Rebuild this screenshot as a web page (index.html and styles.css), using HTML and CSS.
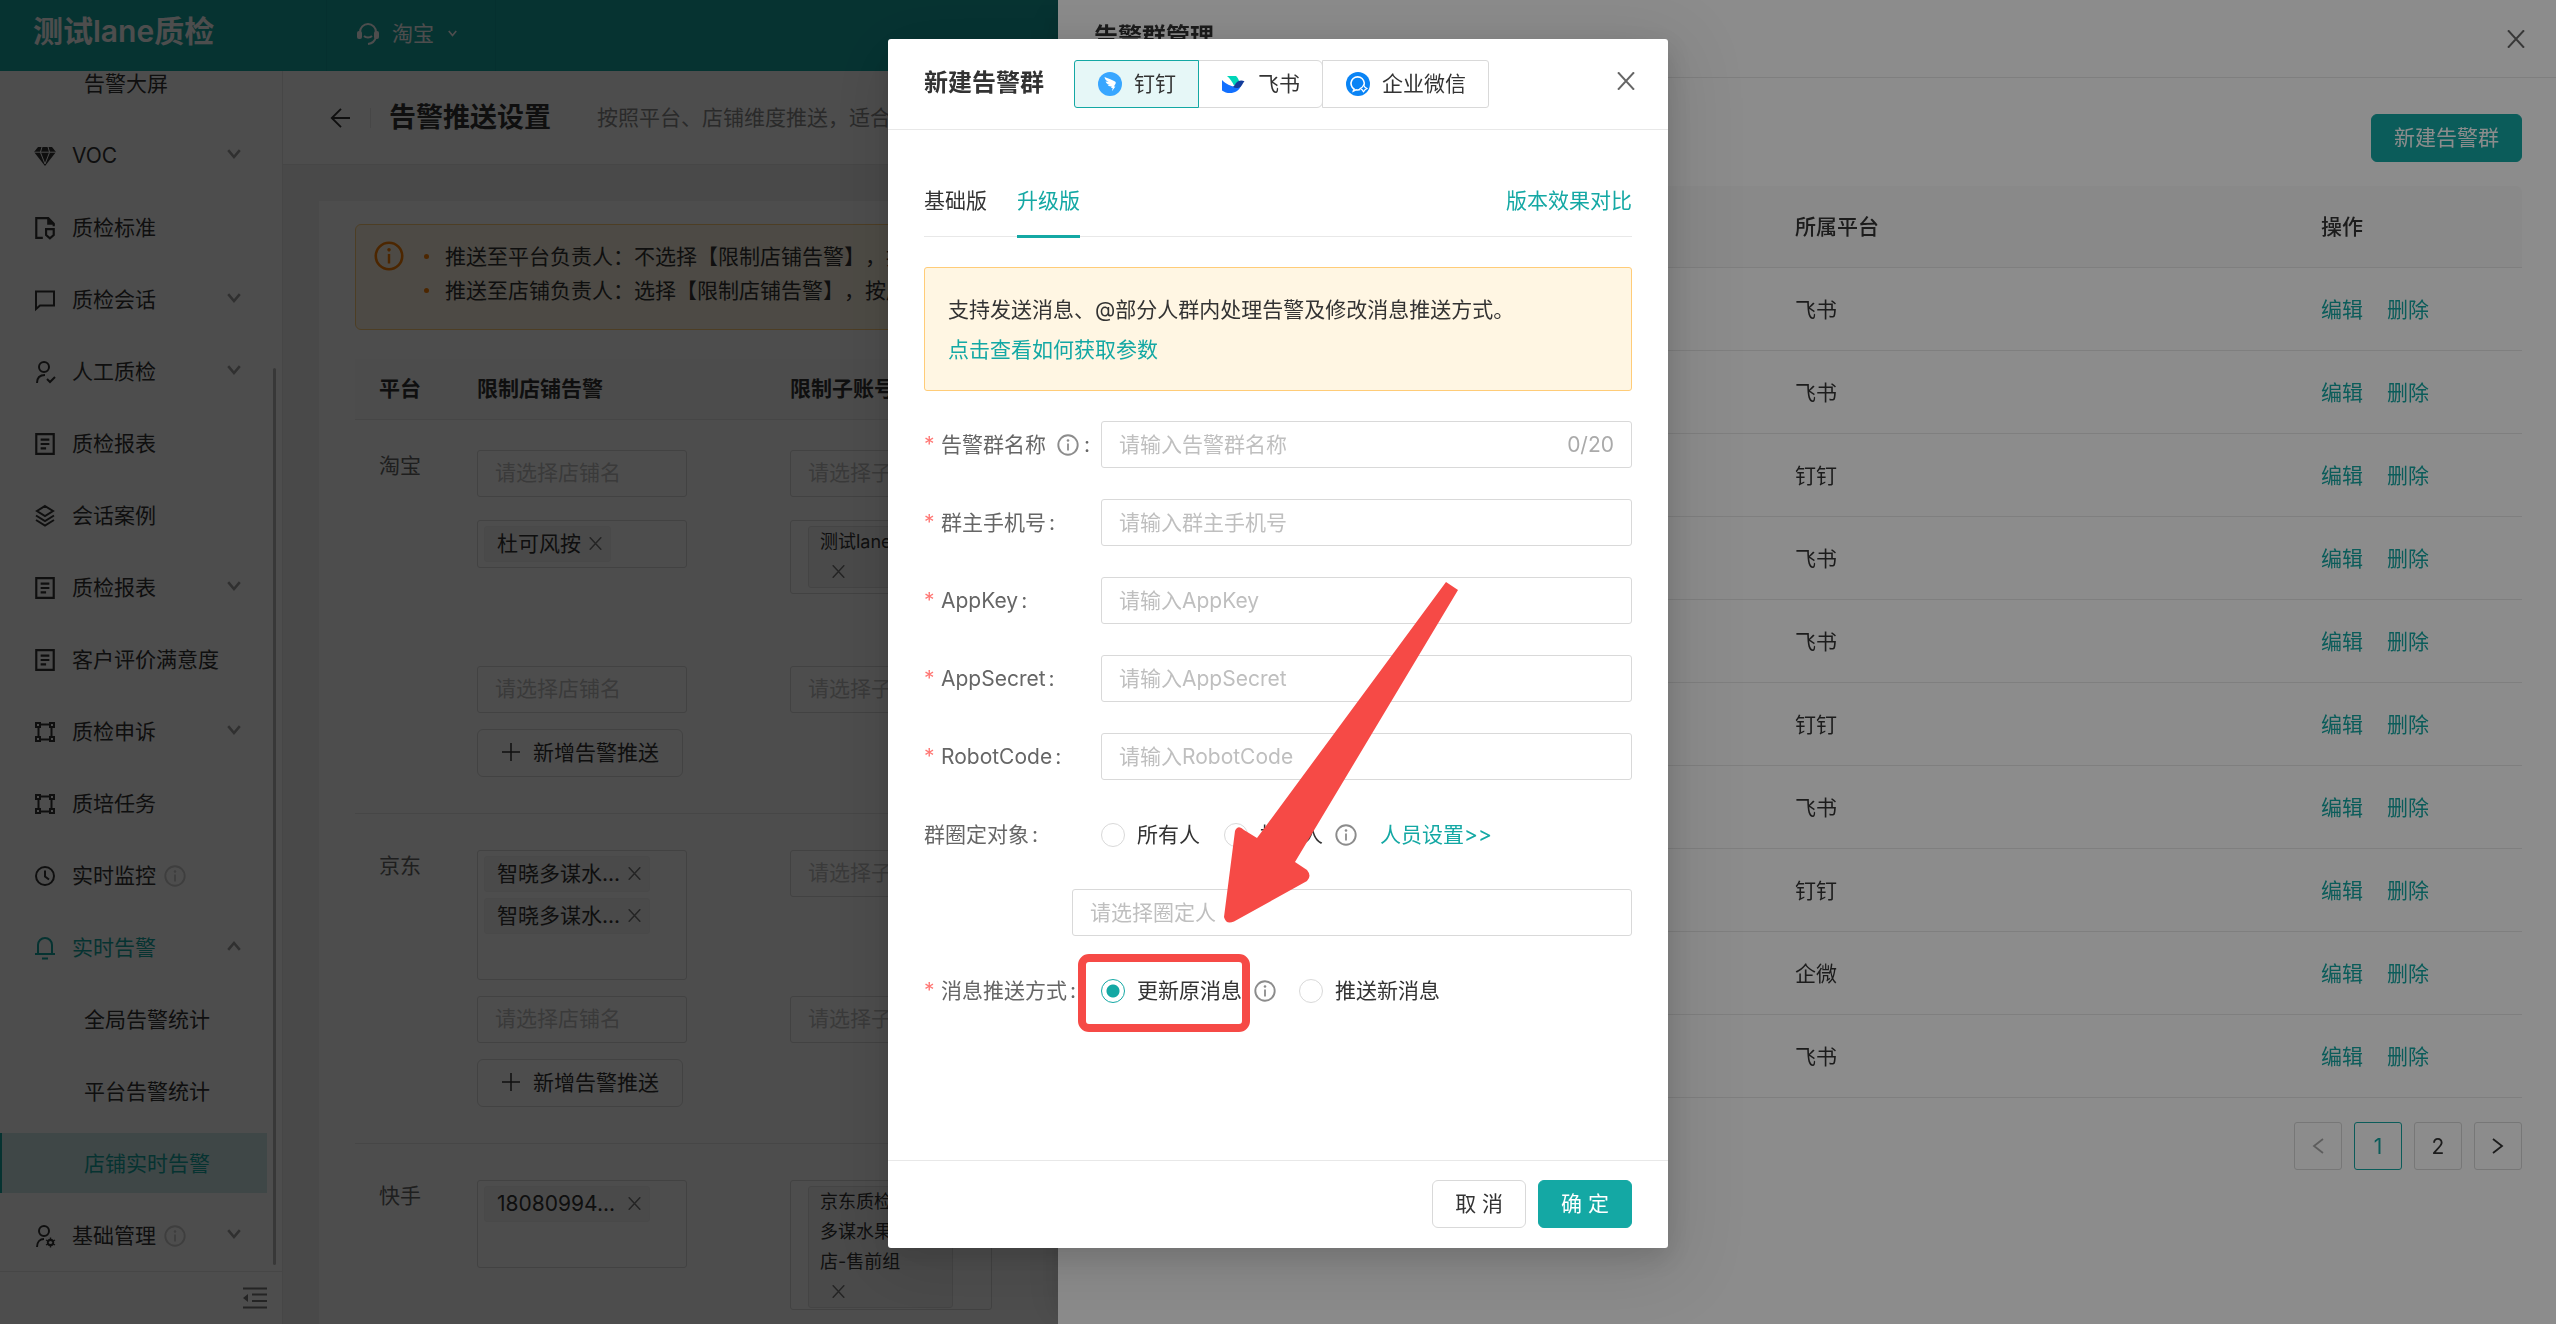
FILE: index.html
```html
<!DOCTYPE html>
<html lang="zh-CN">
<head>
<meta charset="utf-8">
<meta name="viewport" content="width=device-width, initial-scale=1">
<title>告警推送设置</title>
<link rel="stylesheet" href="styles.css">
</head>
<body>
<svg class="sprite" aria-hidden="true">
  <symbol id="i-down" viewBox="0 0 14 10"><path d="M1.200 1.200 7 8l5.800-6.800" fill="none" stroke="currentColor" stroke-width="2.600"/></symbol>
  <symbol id="i-close" viewBox="0 0 18 18"><path d="M1 .300 17 17.700M17 .300 1 17.700" fill="none" stroke="currentColor" stroke-width="2"/></symbol>
  <symbol id="i-info" viewBox="0 0 22 22"><circle cx="11" cy="11" r="9.700" fill="none" stroke="currentColor" stroke-width="1.900"/><circle cx="11" cy="6.500" r="1.300" fill="currentColor"/><path d="M11 9.500v7" stroke="currentColor" stroke-width="1.800"/></symbol>
  <symbol id="i-plus" viewBox="0 0 18 18"><path d="M9 0v18M0 9h18" stroke="currentColor" stroke-width="1.500"/></symbol>
  <symbol id="i-gem" viewBox="0 0 22 20"><path d="M4 1h14l4 5-11 14L0 6z" fill="currentColor"/><path d="M0 6.200h22M6.500 6.500 11 18l4.500-11.500M6.500 6 8 1M15.500 6 14 1" fill="none" stroke="#fff" stroke-width="1"/></symbol>
  <symbol id="i-standard" viewBox="0 0 20 22"><path d="M8 20H2V2h11l5 5v2.500" fill="none" stroke="currentColor" stroke-width="2"/><path d="M12 1v7h7z" fill="currentColor"/><path d="M11 12h7v5.500L14.500 20.500 11 17.500z" fill="none" stroke="currentColor" stroke-width="2"/></symbol>
  <symbol id="i-chat" viewBox="0 0 22 22"><path d="M2 2.500h18v14H6L2 20z" fill="none" stroke="currentColor" stroke-width="2"/></symbol>
  <symbol id="i-usercheck" viewBox="0 0 22 24"><circle cx="10" cy="7" r="5" fill="none" stroke="currentColor" stroke-width="2"/><path d="M3 23c0-5 3-8 8-8M13 19l3 3 5-5" fill="none" stroke="currentColor" stroke-width="2"/></symbol>
  <symbol id="i-usergear" viewBox="0 0 22 24"><circle cx="10" cy="7" r="5" fill="none" stroke="currentColor" stroke-width="2"/><path d="M3 23c0-5 3-8 7-8" fill="none" stroke="currentColor" stroke-width="2"/><circle cx="16.500" cy="18.500" r="2.700" fill="none" stroke="currentColor" stroke-width="2"/><path d="M16.500 13.500v10M12 16l9 5M12 21l9-5" stroke="currentColor" stroke-width="1.400"/><circle cx="16.500" cy="18.500" r="1.600" fill="#fff"/></symbol>
  <symbol id="i-report" viewBox="0 0 20 22"><path d="M2 2h16v18H2zM6 7h8M6 11h8M6 15h5" fill="none" stroke="currentColor" stroke-width="2"/></symbol>
  <symbol id="i-layers" viewBox="0 0 22 24"><path d="m11 2 8 5-8 5-8-5zM2 11.500l9 5.500 9-5.500M2 16l9 5.500 9-5.500" fill="none" stroke="currentColor" stroke-width="2"/></symbol>
  <symbol id="i-frame" viewBox="0 0 22 22"><path d="M6 3.500h10M6 18.500h10M4.500 6v10M17.500 6v10M2 2h4v4H2zM16 2h4v4h-4zM2 16h4v4H2zM16 16h4v4h-4z" fill="none" stroke="currentColor" stroke-width="2"/></symbol>
  <symbol id="i-clock" viewBox="0 0 22 22"><circle cx="11" cy="11" r="9" fill="none" stroke="currentColor" stroke-width="2"/><path d="M11 5.500v6l4 3" fill="none" stroke="currentColor" stroke-width="2"/></symbol>
  <symbol id="i-bell" viewBox="0 0 22 24"><path d="M4 17.500V9a7 7 0 0 1 14 0v8.500M1 18h20M8 22.500h6" fill="none" stroke="currentColor" stroke-width="2"/></symbol>
</svg>

<div class="app">
  <header class="topbar">
    <div class="brand">测试lane质检</div>
    <button class="platform-switch" type="button">
      <svg width="24" height="24" viewBox="0 0 24 24"><path d="M4 10a8 8 0 0 1 16 0M20 15c-1 4-4 6.500-8 7M8 14c2 2 6 2 8 0" fill="none" stroke="currentColor" stroke-width="2"/><rect x="1" y="9" width="5" height="8" rx="2" fill="currentColor"/><rect x="18" y="9" width="5" height="8" rx="2" fill="currentColor"/></svg>
      <span>淘宝</span>
      <svg width="9" height="7"><use href="#i-down"/></svg>
    </button>
  </header>

  <aside class="sidebar">
    <nav class="menu" aria-label="主菜单">
      <a href="#" class="item sub">告警大屏</a>
      <a href="#" class="item"><svg class="ic"><use href="#i-gem"/></svg>VOC<svg class="caret"><use href="#i-down"/></svg></a>
      <a href="#" class="item"><svg class="ic"><use href="#i-standard"/></svg>质检标准</a>
      <a href="#" class="item"><svg class="ic"><use href="#i-chat"/></svg>质检会话<svg class="caret"><use href="#i-down"/></svg></a>
      <a href="#" class="item"><svg class="ic"><use href="#i-usercheck"/></svg>人工质检<svg class="caret"><use href="#i-down"/></svg></a>
      <a href="#" class="item"><svg class="ic"><use href="#i-report"/></svg>质检报表</a>
      <a href="#" class="item"><svg class="ic"><use href="#i-layers"/></svg>会话案例</a>
      <a href="#" class="item"><svg class="ic"><use href="#i-report"/></svg>质检报表<svg class="caret"><use href="#i-down"/></svg></a>
      <a href="#" class="item"><svg class="ic"><use href="#i-report"/></svg>客户评价满意度</a>
      <a href="#" class="item"><svg class="ic"><use href="#i-frame"/></svg>质检申诉<svg class="caret"><use href="#i-down"/></svg></a>
      <a href="#" class="item"><svg class="ic"><use href="#i-frame"/></svg>质培任务</a>
      <a href="#" class="item"><svg class="ic"><use href="#i-clock"/></svg>实时监控<svg class="hint"><use href="#i-info"/></svg></a>
      <a href="#" class="item open"><svg class="ic"><use href="#i-bell"/></svg>实时告警<svg class="caret up"><use href="#i-down"/></svg></a>
      <a href="#" class="item sub">全局告警统计</a>
      <a href="#" class="item sub">平台告警统计</a>
      <a href="#" class="item sub active" aria-current="page">店铺实时告警</a>
      <a href="#" class="item"><svg class="ic"><use href="#i-usergear"/></svg>基础管理<svg class="hint"><use href="#i-info"/></svg><svg class="caret"><use href="#i-down"/></svg></a>
    </nav>
    <div class="collapse">
      <button type="button" class="bare" aria-label="收起菜单">
        <svg width="24" height="22" viewBox="0 0 24 22"><path d="M0 1.500h24M9 7.500h15M9 14h15M0 20.500h24" stroke="currentColor" stroke-width="2"/><path d="M0 11l5-4v8z" fill="currentColor"/></svg>
      </button>
    </div>
    <div class="scrollbar"></div>
  </aside>

  <main class="main">
    <div class="page-head">
      <button type="button" class="bare" aria-label="返回"><svg width="20" height="20" viewBox="0 0 20 20"><path d="M20 10H1.500M11 .800 1.800 10l9.200 9.200" fill="none" stroke="currentColor" stroke-width="1.900"/></svg></button>
      <h1>告警推送设置</h1>
      <p>按照平台、店铺维度推送，适合</p>
    </div>
    <section class="card">
      <div class="notice">
        <svg width="30" height="30"><use href="#i-info"/></svg>
        <ul>
          <li>推送至平台负责人：不选择【限制店铺告警】，按平台推送</li>
          <li>推送至店铺负责人：选择【限制店铺告警】，按店铺推送</li>
        </ul>
      </div>
      <table class="rules">
        <thead><tr><th class="c1">平台</th><th class="c2">限制店铺告警</th><th class="c3">限制子账号告警</th></tr></thead>
        <tbody>
          <tr>
            <td>淘宝</td>
            <td><div class="stack">
              <div class="slot first"><input class="pick" placeholder="请选择店铺名" aria-label="店铺名"></div>
              <div class="slot tall"><div class="pick"><span class="tag">杜可风按<button type="button" aria-label="移除"><svg><use href="#i-close"/></svg></button></span></div></div>
              <div class="slot"><input class="pick" placeholder="请选择店铺名" aria-label="店铺名"></div>
              <button type="button" class="btn add"><svg><use href="#i-plus"/></svg>新增告警推送</button>
            </div></td>
            <td><div class="stack wide">
              <div class="slot first"><input class="pick" placeholder="请选择子账号" aria-label="子账号"></div>
              <div class="slot tall"><div class="pick"><span class="tag small">测试lane质检<button type="button" aria-label="移除"><svg><use href="#i-close"/></svg></button></span></div></div>
              <div class="slot"><input class="pick" placeholder="请选择子账号" aria-label="子账号"></div>
            </div></td>
          </tr>
          <tr>
            <td>京东</td>
            <td><div class="stack">
              <div class="slot tall fill"><div class="pick"><span class="tag long">智晓多谋水...<button type="button" aria-label="移除"><svg><use href="#i-close"/></svg></button></span><span class="tag long">智晓多谋水...<button type="button" aria-label="移除"><svg><use href="#i-close"/></svg></button></span></div></div>
              <div class="slot"><input class="pick" placeholder="请选择店铺名" aria-label="店铺名"></div>
              <button type="button" class="btn add"><svg><use href="#i-plus"/></svg>新增告警推送</button>
            </div></td>
            <td><div class="stack wide">
              <div class="slot tall"><input class="pick" placeholder="请选择子账号" aria-label="子账号"></div>
              <div class="slot"><input class="pick" placeholder="请选择子账号" aria-label="子账号"></div>
            </div></td>
          </tr>
          <tr>
            <td>快手</td>
            <td><div class="stack">
              <div class="slot mid fill"><div class="pick"><span class="tag long">18080994...<button type="button" aria-label="移除"><svg><use href="#i-close"/></svg></button></span></div></div>
            </div></td>
            <td><div class="stack wide">
              <div class="slot tall fill"><div class="pick scrolls"><span class="tag small">京东质检智晓<br>多谋水果<br>店-售前组<button type="button" aria-label="移除"><svg><use href="#i-close"/></svg></button></span></div></div>
            </div></td>
          </tr>
        </tbody>
      </table>
    </section>
  </main>
</div>

<div class="mask"></div>

<section class="drawer" aria-label="告警群管理">
  <header class="drawer-head">
    <h2>告警群管理</h2>
    <button type="button" class="bare" aria-label="关闭"><svg width="18" height="18"><use href="#i-close"/></svg></button>
  </header>
  <div class="drawer-body">
    <button type="button" class="btn primary">新建告警群</button>
    <table class="groups">
      <thead><tr><td></td><th class="g2">所属平台</th><th class="g3">操作</th></tr></thead>
      <tbody>
        <tr><td></td><td>飞书</td><td><a href="#">编辑</a><a href="#">删除</a></td></tr>
        <tr><td></td><td>飞书</td><td><a href="#">编辑</a><a href="#">删除</a></td></tr>
        <tr><td></td><td>钉钉</td><td><a href="#">编辑</a><a href="#">删除</a></td></tr>
        <tr><td></td><td>飞书</td><td><a href="#">编辑</a><a href="#">删除</a></td></tr>
        <tr><td></td><td>飞书</td><td><a href="#">编辑</a><a href="#">删除</a></td></tr>
        <tr><td></td><td>钉钉</td><td><a href="#">编辑</a><a href="#">删除</a></td></tr>
        <tr><td></td><td>飞书</td><td><a href="#">编辑</a><a href="#">删除</a></td></tr>
        <tr><td></td><td>钉钉</td><td><a href="#">编辑</a><a href="#">删除</a></td></tr>
        <tr><td></td><td>企微</td><td><a href="#">编辑</a><a href="#">删除</a></td></tr>
        <tr><td></td><td>飞书</td><td><a href="#">编辑</a><a href="#">删除</a></td></tr>
      </tbody>
    </table>
    <nav class="pager" aria-label="分页">
      <button type="button" class="off" aria-label="上一页"><svg width="12" height="16" viewBox="0 0 12 16"><path d="M11 1 2 8l9 7" fill="none" stroke="currentColor" stroke-width="1.800"/></svg></button>
      <button type="button" class="on">1</button>
      <button type="button">2</button>
      <button type="button" aria-label="下一页"><svg width="12" height="16" viewBox="0 0 12 16"><path d="M1 1l9 7-9 7" fill="none" stroke="currentColor" stroke-width="1.800"/></svg></button>
    </nav>
  </div>
</section>

<div class="mask modal-wrap">
  <section class="modal" role="dialog" aria-label="新建告警群">
    <header class="modal-head">
      <h2>新建告警群</h2>
      <div class="channels" role="radiogroup" aria-label="平台">
        <label><input type="radio" name="channel" checked>
          <svg width="24" height="24" viewBox="0 0 24 24"><circle cx="12" cy="12" r="12" fill="#38a6ff"/><path d="M6.500 5c3 1.600 7.500 2.600 10.500 4.400 1 .700 1 1.600.400 2.600l-1.500 2.600h1.500l-3.400 4.600.700-3.200h-1.600l.600-1.600c-1.700.200-3.200-.200-4.200-1.600 1 .100 1.600 0 2.200-.200C9.200 12 8 11 7.600 9.400l3 .700C8.300 8.800 6.800 7.200 6.500 5z" fill="#fff"/></svg>钉钉</label>
        <label><input type="radio" name="channel">
          <svg width="24" height="24" viewBox="0 0 24 24"><path d="M5 4h9c1.700 1.700 2.800 3.700 3.300 6L12 13.500C10.500 10 8 6.500 5 4z" fill="#00d6b9"/><path d="M0 8c4 4 8.500 6.600 14.500 6.800L19 14c-2 4.500-6 7-11 7-3 0-5.800-.900-8-2.600z" fill="#1270ff"/><path d="M22.500 9.200c-4-1.400-7.300-.400-10 4-1 1.600-1.300 1.900-2 1.600 3 1.700 6.500 2 8.800-.800 1-1.300 1.700-3.400 3.200-4.800z" fill="#133c9a"/></svg>飞书</label>
        <label><input type="radio" name="channel">
          <svg width="24" height="24" viewBox="0 0 24 24"><circle cx="12" cy="12" r="12" fill="#0a84f5"/><path d="M18 13.200A6.600 6.600 0 1 0 8 17l-.600 2L10 17.800c1.500.400 3 .200 4-.200" fill="none" stroke="#fff" stroke-width="1.600"/><path d="m17.500 13 1.500 2.200 2 1.300-2 1.300-1.500 2-1.400-2-2-1.300 2-1.300z" fill="none" stroke="#fff" stroke-width="1.200"/></svg>企业微信</label>
      </div>
      <button type="button" class="bare" aria-label="关闭"><svg width="18" height="18"><use href="#i-close"/></svg></button>
    </header>
    <form class="modal-body">
      <div class="tabs">
        <button type="button">基础版</button>
        <button type="button" class="on">升级版</button>
        <a href="#">版本效果对比</a>
      </div>
      <div class="tip">
        <p>支持发送消息、@部分人群内处理告警及修改消息推送方式。</p>
        <a href="#">点击查看如何获取参数</a>
      </div>
      <div class="field">
        <label class="name req" for="f-name">告警群名称<svg class="q"><use href="#i-info"/></svg></label>
        <div class="box"><input id="f-name" placeholder="请输入告警群名称"><span>0/20</span></div>
      </div>
      <div class="field">
        <label class="name req" for="f-phone">群主手机号</label>
        <div class="box"><input id="f-phone" placeholder="请输入群主手机号"></div>
      </div>
      <div class="field">
        <label class="name req" for="f-key">AppKey</label>
        <div class="box"><input id="f-key" placeholder="请输入AppKey"></div>
      </div>
      <div class="field">
        <label class="name req" for="f-secret">AppSecret</label>
        <div class="box"><input id="f-secret" placeholder="请输入AppSecret"></div>
      </div>
      <div class="field">
        <label class="name req" for="f-robot">RobotCode</label>
        <div class="box"><input id="f-robot" placeholder="请输入RobotCode"></div>
      </div>
      <div class="field">
        <span class="name">群圈定对象</span>
        <label class="radio"><input type="radio" name="target">所有人</label>
        <label class="radio"><input type="radio" name="target">指定人</label>
        <svg class="q"><use href="#i-info"/></svg>
        <a href="#">人员设置&gt;&gt;</a>
      </div>
      <div class="field inset">
        <div class="box"><input placeholder="请选择圈定人" aria-label="圈定人"></div>
      </div>
      <div class="field">
        <span class="name req">消息推送方式</span>
        <label class="radio"><input type="radio" name="mode" checked>更新原消息</label>
        <svg class="q"><use href="#i-info"/></svg>
        <label class="radio"><input type="radio" name="mode">推送新消息</label>
      </div>
    </form>
    <footer class="modal-foot">
      <button type="button" class="btn">取 消</button>
      <button type="button" class="btn primary">确 定</button>
    </footer>
    <div class="callout"></div>
    <svg class="arrow" viewBox="0 0 234 341" aria-hidden="true"><path d="M222 0 234 8 71 280l12 8q5 6 0 11L10 339.500Q2 343 0 335L11 249q3-7 9-1l13 8z" fill="#f64a46"/></svg>
  </section>
</div>
</body>
</html>
```

FILE: styles.css
```css
:root {
  --teal: #14a8a4;
  --text: #333;
  --muted: #666;
  --faint: #bfbfbf;
  --line: #e8e8e8;
  --border: #d9d9d9;
}
* { box-sizing: border-box; margin: 0; padding: 0; }
html, body { height: 100%; }
body {
  overflow: hidden;
  font: 21px/33px Inter, "Noto Sans CJK SC", sans-serif;
  color: var(--text);
  text-spacing-trim: space-all;
}
a { color: var(--teal); text-decoration: none; }
button, input { font: inherit; color: inherit; }
ul { list-style: none; }
svg { display: block; flex: none; }
input::placeholder { color: var(--faint); opacity: 1; }
.sprite { position: absolute; width: 0; height: 0; }
.bare { background: none; border: 0; display: flex; cursor: pointer; }

.btn {
  height: 48px;
  padding: 0 22px 1px;
  border: 1px solid var(--border);
  border-radius: 6px;
  background: #fff;
  white-space: nowrap;
}
.btn.primary { background: var(--teal); border-color: var(--teal); color: #fff; }

/* shell */
.app {
  display: grid;
  grid-template: 71px minmax(0, 1fr) / 283px minmax(0, 1fr);
  height: 100vh;
  overflow: hidden;
}
.topbar {
  grid-column: 1 / -1;
  display: flex;
  background: var(--teal);
  color: #fff;
}
.brand { width: 326px; padding: 15px 33px; font-size: 30px; font-weight: 600; }
.platform-switch {
  display: flex;
  align-items: center;
  gap: 12px;
  width: 170px;
  padding: 0 0 4px 29px;
  background: none;
  border: solid #12a09c;
  border-width: 0 1px;
}
.platform-switch svg:last-child { margin-left: 2px; }

/* sidebar */
.sidebar {
  position: relative;
  display: flex;
  flex-direction: column;
  border-right: 1px solid var(--line);
  background: #fff;
}
.menu {
  flex: 1;
  min-height: 0;
  overflow: hidden;
  display: flex;
  flex-direction: column;
  justify-content: flex-end;
  gap: 12px;
  padding: 0 15px 6px 0;
}
.item {
  flex: none;
  display: flex;
  align-items: center;
  height: 60px;
  padding: 1px 26px 0 34px;
  color: var(--text);
}
.item.sub { padding-left: 84px; }
.item.open { color: var(--teal); }
.item.active { padding-left: 82px; border-left: 2px solid var(--teal); background: #d2ebea; color: var(--teal); }
.ic { width: 22px; height: 24px; margin-right: 16px; }
.caret { width: 14px; height: 10px; margin: 0 0 3px auto; color: #a0a0a0; }
.caret.up { transform: rotate(180deg); }
.hint { width: 22px; height: 22px; margin-left: 8px; color: #ccc; }
.collapse {
  display: flex;
  justify-content: flex-end;
  align-items: center;
  height: 53px;
  padding-right: 15px;
  border-top: 1px solid var(--line);
  color: #777;
}
.scrollbar {
  position: absolute;
  right: 6px;
  top: 297px;
  bottom: 59px;
  width: 3px;
  border-radius: 2px;
  background: #bbb;
}

/* page */
.main { background: #f0f0f0; overflow: hidden; }
.page-head {
  display: flex;
  align-items: center;
  height: 94px;
  padding-left: 47px;
  border-bottom: 1px solid var(--line);
  background: #fff;
}
.page-head h1 {
  margin-left: 20px;
  padding-left: 18px;
  border-left: 1px solid var(--line);
  font-size: 27px;
  line-height: 20px;
  font-weight: 600;
}
.page-head p { margin-left: 46px; color: #8c8c8c; white-space: nowrap; }
.card { margin: 36px 36px 0; padding: 23px 36px 0; background: #fff; min-height: 100vh; }
.notice {
  display: flex;
  gap: 20px;
  height: 106px;
  padding: 14px 18px;
  border: 1px solid #ffcc78;
  border-radius: 6px;
  background: #fff6e3;
}
.notice > svg { margin-top: 2px; color: #fa7d00; }
.notice li { display: flex; align-items: center; gap: 16px; height: 34px; white-space: nowrap; }
.notice li::before { content: ""; width: 5px; height: 5px; border-radius: 50%; background: #fa7d00; }

.rules { width: 100%; margin-top: 29px; border-collapse: collapse; table-layout: fixed; }
.rules th { height: 60px; padding-left: 24px; text-align: left; font-weight: 600; background: #fafafa; border-bottom: 1px solid var(--line); }
.rules .c1 { width: 98px; }
.rules .c2 { width: 313px; }
.rules td { padding: 36px 0 36px 24px; vertical-align: top; border-bottom: 1px solid var(--line); color: var(--muted); line-height: 31px; }
.rules td + td { color: var(--text); }
.rules tbody tr:first-child td { padding-top: 30px; }
.stack { display: flex; flex-direction: column; align-items: flex-start; gap: 16px; width: 210px; }
.stack.wide { width: 202px; }
.slot { width: 100%; height: 47px; }
.slot.first { height: 54px; }
.slot.tall { height: 130px; }
.slot.mid { height: 88px; }
.slot.fill .pick { height: 100%; }
.pick {
  display: flex;
  flex-direction: column;
  align-items: flex-start;
  gap: 6px;
  width: 100%;
  min-height: 47px;
  padding: 5px 6px;
  border: 1px solid var(--border);
  border-radius: 3px;
  background: #fff;
}
input.pick { height: 47px; padding: 0 17px 2px; }
.wide .pick { padding-left: 17px; }
.tag {
  display: flex;
  align-items: center;
  justify-content: space-between;
  gap: 8px;
  height: 36px;
  padding: 0 8px 1px 12px;
  border: 1px solid #f0f0f0;
  border-radius: 3px;
  background: #f5f5f5;
  white-space: nowrap;
}
.tag.long { width: 166px; }
.tag button { border: 0; background: none; color: #777; }
.tag svg { width: 13px; height: 13px; }
.tag.small { display: block; width: 145px; height: auto; padding: 0 11px; border-color: #e0e0e0; font-size: 18px; line-height: 30px; }
.tag.small button { display: block; height: 30px; margin-left: 12px; }
.scrolls { border-right: 1px solid var(--border); overflow: hidden; }
.add { display: flex; align-items: center; gap: 13px; padding: 0 23px 1px 24px; }
.add svg { width: 18px; height: 18px; }

/* layers */
.mask { position: fixed; inset: 0; background: rgba(0, 0, 0, .45); }
.drawer {
  position: fixed;
  inset: 0 0 0 auto;
  width: calc(100% - 1058px);
  background: #fff;
  box-shadow: -9px 0 24px -12px rgba(0, 0, 0, .1), -14px 0 42px rgba(0, 0, 0, .06);
}
.drawer-head {
  display: flex;
  justify-content: space-between;
  align-items: center;
  height: 78px;
  padding: 0 31px 0 36px;
  border-bottom: 1px solid var(--line);
  color: var(--muted);
}
.drawer-head h2, .modal-head h2 { padding-bottom: 3px; font-size: 24px; font-weight: 600; color: var(--text); }
.drawer-head h2 { padding-bottom: 4px; }
.drawer-body { display: flex; flex-direction: column; align-items: flex-end; gap: 24px; padding: 36px 34px 36px 36px; }
.groups { width: 100%; border-collapse: separate; border-spacing: 0; table-layout: fixed; }
.groups th, .groups td { height: 83px; padding: 0 24px; text-align: left; border-bottom: 1px solid var(--line); }
.groups thead > tr > * { height: 82px; background: #fafafa; }
.groups th { font-weight: 500; }
.groups th:last-child { border-radius: 0 6px 0 0; }
.g2 { width: 526px; }
.g3 { width: 225px; }
.groups a { margin-right: 24px; }
.groups a:last-child { margin-right: 0; }
.pager { display: flex; gap: 12px; }
.pager button {
  display: grid;
  place-items: center;
  width: 48px;
  height: 48px;
  border: 1px solid var(--border);
  border-radius: 3px;
  background: #fff;
}
.pager .on { border-color: var(--teal); color: var(--teal); }
.pager .off { color: #aaa; }

/* dialog */
.modal-wrap { display: flex; justify-content: center; align-items: flex-start; padding-top: 39px; }
.modal {
  position: relative;
  display: flex;
  flex-direction: column;
  width: 780px;
  border-radius: 3px;
  background: #fff;
  box-shadow: 0 9px 24px rgba(0, 0, 0, .12), 0 14px 72px 12px rgba(0, 0, 0, .1);
}
.modal-head {
  display: flex;
  align-items: center;
  height: 91px;
  padding: 0 33px 0 36px;
  border-bottom: 1px solid var(--line);
  color: var(--muted);
}
.modal-head > .bare { margin: 0 0 6px auto; }
.channels { display: flex; margin-left: 30px; color: var(--text); }
.channels label {
  display: flex;
  align-items: center;
  gap: 12px;
  height: 48px;
  padding: 0 22px 1px 23px;
  border: 1px solid var(--border);
}
.channels label + label { margin-left: -1px; }
.channels label:first-child { border-radius: 3px 0 0 3px; }
.channels label:nth-child(2) { border-radius: 0 6px 6px 0; }
.channels label:last-child { border-radius: 0 3px 3px 0; }
.channels label:has(:checked) { z-index: 1; border-color: var(--teal); background: #e6f7f7; }
.channels input { position: absolute; opacity: 0; }

.modal-body { min-height: 1030px; padding: 43px 36px 0; }
.tabs { display: flex; align-items: stretch; gap: 30px; height: 64px; border-bottom: 1px solid var(--line); }
.tabs button { height: 65px; padding-bottom: 8px; border: 0; border-bottom: 3px solid transparent; background: none; }
.tabs .on { color: var(--teal); border-color: var(--teal); }
.tabs a { margin-left: auto; padding-top: 11px; }
.tip {
  margin: 30px 0;
  padding: 22px 23px 20px;
  border: 1px solid #ffcc78;
  border-radius: 3px;
  background: #fff6e3;
  line-height: 40px;
}
.tip a { display: block; }
.field { display: flex; align-items: center; height: 47px; margin-bottom: 31px; }
.name { display: flex; align-items: center; width: 177px; flex: none; color: var(--muted); }
.name::after { content: ":"; margin-left: 3px; }
.name.req::before { content: "*"; width: 17px; color: #ff7875; }
.name .q { margin: 0 2px 0 11px; }
.q { width: 22px; height: 22px; color: #8c8c8c; }
.box {
  flex: 1;
  display: flex;
  align-items: center;
  height: 47px;
  padding: 0 17px;
  border: 1px solid var(--border);
  border-radius: 3px;
  color: #aaa;
}
.box input { flex: 1; min-width: 0; border: 0; outline: 0; background: none; color: var(--text); }
.inset { padding-left: 148px; }
.radio { display: flex; align-items: center; gap: 12px; margin-right: 24px; }
.radio:has(+ .q) { margin-right: 12px; }
.q + .radio, .q + a { margin-left: 23px; }
.radio input {
  appearance: none;
  width: 24px;
  height: 24px;
  border: 1px solid var(--border);
  border-radius: 50%;
  background: #fff;
}
.radio input:checked { border-color: var(--teal); background: radial-gradient(circle, var(--teal) 6px, #fff 7px); }
.modal-foot {
  display: flex;
  justify-content: flex-end;
  gap: 12px;
  padding: 19px 36px 20px;
  border-top: 1px solid var(--line);
}

/* annotation drawn over the form */
.callout {
  position: absolute;
  left: 190px;
  top: 915px;
  width: 172px;
  height: 78px;
  border: 8px solid #f64a46;
  border-radius: 11px;
}
.arrow { position: absolute; left: 336px; top: 543px; width: 234px; height: 341px; }
```
